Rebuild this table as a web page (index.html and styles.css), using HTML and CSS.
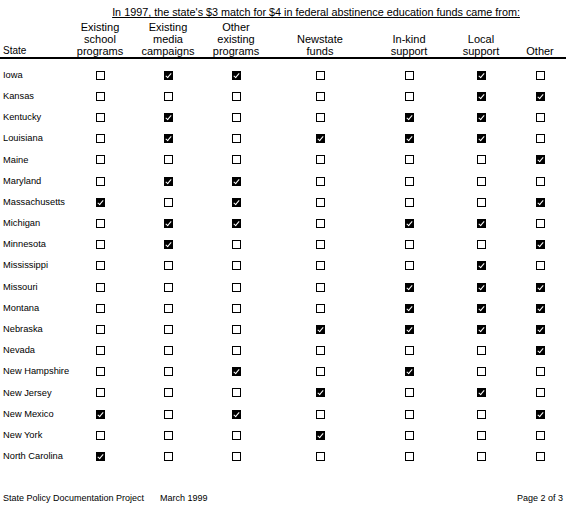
FILE: index.html
```html
<!DOCTYPE html>
<html lang="en">
<head>
    <meta charset="UTF-8">
    <title>State Policy Documentation Project - Abstinence Education Match</title>
    <link rel="stylesheet" href="styles.css">
</head>
<body>
    <div class="page">
        <table class="match-table">
            <colgroup>
                <col class="c-state">
                <col class="c-school">
                <col class="c-media">
                <col class="c-other-prog">
                <col class="c-newstate">
                <col class="c-inkind">
                <col class="c-local">
                <col class="c-other">
            </colgroup>
            <thead>
                <tr class="title-row">
                    <td></td>
                    <td colspan="7" class="title"><u>In 1997, the state's $3 match for $4 in federal abstinence education funds came from:</u></td>
                </tr>
                <tr class="head-row">
                    <th class="state-col">State</th>
                    <th>Existing<br>school<br>programs</th>
                    <th>Existing<br>media<br>campaigns</th>
                    <th>Other<br>existing<br>programs</th>
                    <th>Newstate<br>funds</th>
                    <th>In-kind<br>support</th>
                    <th>Local<br>support</th>
                    <th>Other</th>
                </tr>
            </thead>
            <tbody>
                <tr><td class="state">Iowa</td><td><i class="box"></i></td><td><i class="box on"></i></td><td><i class="box on"></i></td><td><i class="box"></i></td><td><i class="box"></i></td><td><i class="box on"></i></td><td><i class="box"></i></td></tr>
                <tr><td class="state">Kansas</td><td><i class="box"></i></td><td><i class="box"></i></td><td><i class="box"></i></td><td><i class="box"></i></td><td><i class="box"></i></td><td><i class="box on"></i></td><td><i class="box on"></i></td></tr>
                <tr><td class="state">Kentucky</td><td><i class="box"></i></td><td><i class="box on"></i></td><td><i class="box"></i></td><td><i class="box"></i></td><td><i class="box on"></i></td><td><i class="box on"></i></td><td><i class="box"></i></td></tr>
                <tr><td class="state">Louisiana</td><td><i class="box"></i></td><td><i class="box on"></i></td><td><i class="box"></i></td><td><i class="box on"></i></td><td><i class="box on"></i></td><td><i class="box on"></i></td><td><i class="box"></i></td></tr>
                <tr><td class="state">Maine</td><td><i class="box"></i></td><td><i class="box"></i></td><td><i class="box"></i></td><td><i class="box"></i></td><td><i class="box"></i></td><td><i class="box"></i></td><td><i class="box on"></i></td></tr>
                <tr><td class="state">Maryland</td><td><i class="box"></i></td><td><i class="box on"></i></td><td><i class="box on"></i></td><td><i class="box"></i></td><td><i class="box"></i></td><td><i class="box"></i></td><td><i class="box"></i></td></tr>
                <tr><td class="state">Massachusetts</td><td><i class="box on"></i></td><td><i class="box"></i></td><td><i class="box on"></i></td><td><i class="box"></i></td><td><i class="box"></i></td><td><i class="box"></i></td><td><i class="box on"></i></td></tr>
                <tr><td class="state">Michigan</td><td><i class="box"></i></td><td><i class="box on"></i></td><td><i class="box on"></i></td><td><i class="box"></i></td><td><i class="box on"></i></td><td><i class="box on"></i></td><td><i class="box"></i></td></tr>
                <tr><td class="state">Minnesota</td><td><i class="box"></i></td><td><i class="box on"></i></td><td><i class="box"></i></td><td><i class="box"></i></td><td><i class="box"></i></td><td><i class="box"></i></td><td><i class="box on"></i></td></tr>
                <tr><td class="state">Mississippi</td><td><i class="box"></i></td><td><i class="box"></i></td><td><i class="box"></i></td><td><i class="box"></i></td><td><i class="box"></i></td><td><i class="box on"></i></td><td><i class="box"></i></td></tr>
                <tr><td class="state">Missouri</td><td><i class="box"></i></td><td><i class="box"></i></td><td><i class="box"></i></td><td><i class="box"></i></td><td><i class="box on"></i></td><td><i class="box on"></i></td><td><i class="box on"></i></td></tr>
                <tr><td class="state">Montana</td><td><i class="box"></i></td><td><i class="box"></i></td><td><i class="box"></i></td><td><i class="box"></i></td><td><i class="box on"></i></td><td><i class="box on"></i></td><td><i class="box on"></i></td></tr>
                <tr><td class="state">Nebraska</td><td><i class="box"></i></td><td><i class="box"></i></td><td><i class="box"></i></td><td><i class="box on"></i></td><td><i class="box on"></i></td><td><i class="box on"></i></td><td><i class="box on"></i></td></tr>
                <tr><td class="state">Nevada</td><td><i class="box"></i></td><td><i class="box"></i></td><td><i class="box"></i></td><td><i class="box"></i></td><td><i class="box"></i></td><td><i class="box"></i></td><td><i class="box on"></i></td></tr>
                <tr><td class="state">New Hampshire</td><td><i class="box"></i></td><td><i class="box"></i></td><td><i class="box on"></i></td><td><i class="box"></i></td><td><i class="box on"></i></td><td><i class="box"></i></td><td><i class="box"></i></td></tr>
                <tr><td class="state">New Jersey</td><td><i class="box"></i></td><td><i class="box"></i></td><td><i class="box"></i></td><td><i class="box on"></i></td><td><i class="box"></i></td><td><i class="box on"></i></td><td><i class="box"></i></td></tr>
                <tr><td class="state">New Mexico</td><td><i class="box on"></i></td><td><i class="box"></i></td><td><i class="box on"></i></td><td><i class="box"></i></td><td><i class="box"></i></td><td><i class="box"></i></td><td><i class="box on"></i></td></tr>
                <tr><td class="state">New York</td><td><i class="box"></i></td><td><i class="box"></i></td><td><i class="box"></i></td><td><i class="box on"></i></td><td><i class="box"></i></td><td><i class="box"></i></td><td><i class="box"></i></td></tr>
                <tr><td class="state">North Carolina</td><td><i class="box on"></i></td><td><i class="box"></i></td><td><i class="box"></i></td><td><i class="box"></i></td><td><i class="box"></i></td><td><i class="box"></i></td><td><i class="box"></i></td></tr>
            </tbody>
        </table>

        <div class="footer">
            <span class="project">State Policy Documentation Project</span>
            <span class="date">March 1999</span>
            <span class="page-num">Page 2 of 3</span>
        </div>
    </div>
</body>
</html>
```

FILE: styles.css
```css
* {
    margin: 0;
    padding: 0;
    box-sizing: border-box;
}

body {
    font-family: "Liberation Sans", Arial, sans-serif;
    font-size: 10px;
    line-height: 12px;
    color: #000;
    background-color: #fff;
}

.page {
    width: 570px;
    height: 505px;
    display: flex;
    flex-direction: column;
}

.match-table {
    width: 566px;
    table-layout: fixed;
    border-collapse: separate;
    border-spacing: 0;
}

/* column widths */
.c-state { width: 66px; }
.c-school { width: 68px; }
.c-media { width: 68px; }
.c-other-prog { width: 68px; }
.c-newstate { width: 100px; }
.c-inkind { width: 78px; }
.c-local { width: 66px; }
.c-other { width: 52px; }

.title-row td {
    padding-top: 6px;
    height: 18px;
}

.title {
    text-align: center;
    white-space: nowrap;
    font-size: 10.8px;
}

.head-row th {
    font-weight: normal;
    font-size: 11px;
    line-height: 12px;
    text-align: center;
    vertical-align: bottom;
    padding-top: 3px;
    border-bottom: 2px solid #000;
    white-space: nowrap;
}

.head-row .state-col {
    text-align: left;
    padding-left: 3px;
    font-size: 10px;
}

.match-table tbody tr {
    height: 21.2px;
}

.match-table tbody tr:first-child {
    height: 26.4px;
}

.match-table tbody td {
    text-align: center;
    vertical-align: middle;
}

.match-table tbody tr:first-child td {
    padding-top: 5px;
}

.match-table td.state {
    text-align: left;
    padding-left: 3px;
    white-space: nowrap;
    font-size: 9.3px;
}

/* checkbox squares */
.box {
    display: inline-block;
    width: 9px;
    height: 9px;
    border: 1px solid #000;
    vertical-align: middle;
    position: relative;
}

.box.on {
    background: #000;
}

.box.on::after {
    content: "";
    position: absolute;
    left: 2px;
    top: 0px;
    width: 2px;
    height: 5px;
    border-right: 1px solid #fff;
    border-bottom: 1px solid #fff;
    transform: rotate(40deg);
}

.footer {
    margin-top: auto;
    display: flex;
    font-size: 9px;
    padding: 0 7px 1px 3px;
}

.date {
    margin-left: 16px;
}

.page-num {
    margin-left: auto;
}
```
